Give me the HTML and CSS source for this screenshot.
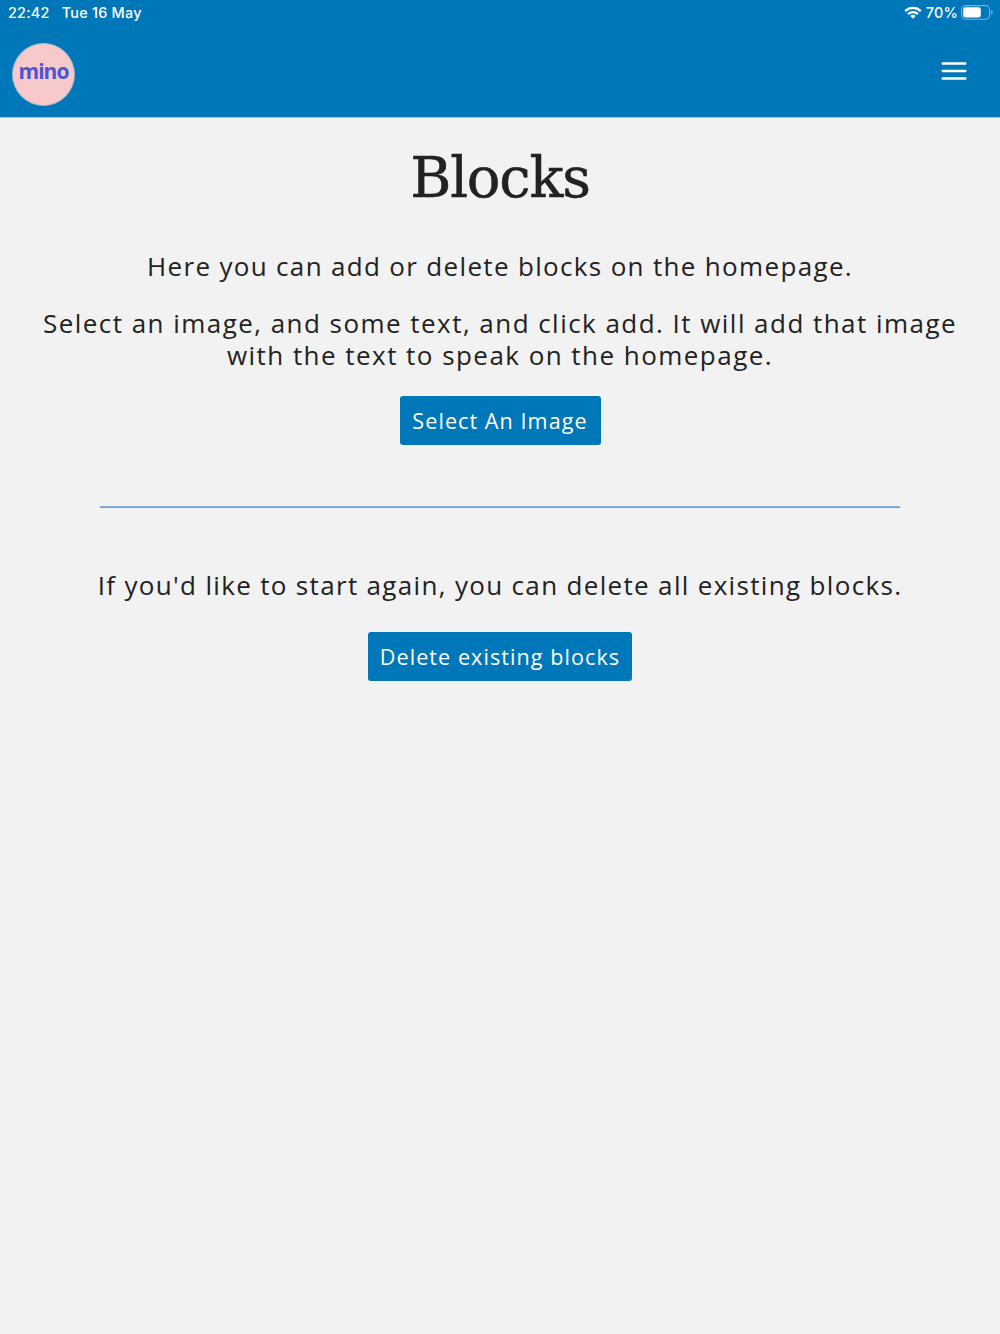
FILE: index.html
```
<!DOCTYPE html>
<html lang="en">
<head>
  <meta charset="UTF-8">
  <meta name="viewport" content="width=device-width, initial-scale=1.0">
  <title>Blocks</title>
  <link rel="stylesheet" href="styles.css">
</head>
<body>
  <!-- Status bar -->
  <div class="status-bar">
    <span class="time">22:42</span>
    <span class="date">Tue 16 May</span>
    <svg class="wifi" width="18" height="13" viewBox="0 0 18 13" fill="none" stroke="#fff" stroke-width="2.3">
      <path d="M1.2 5.1a11.2 11.2 0 0 1 15.6 0"/>
      <path d="M4 8.1a7.1 7.1 0 0 1 10 0"/>
      <path d="M9 12.8L6.3 10.1a3.9 3.9 0 0 1 5.4 0z" fill="#fff" stroke="none"/>
    </svg>
    <span class="percent">70%</span>
    <svg class="battery" width="32" height="15" viewBox="0 0 32 15">
      <rect x="0.6" y="0.6" width="28" height="13.6" rx="4" fill="none" stroke="#fff" stroke-opacity="0.45" stroke-width="1.1"/>
      <rect x="2.2" y="2.2" width="17.6" height="10.4" rx="2.3" fill="#fff"/>
      <path d="M30.3 5v4.8c1.8-.8 1.8-4 0-4.8z" fill="#fff" fill-opacity="0.5"/>
    </svg>
  </div>

  <!-- Header -->
  <header>
    <div class="logo"><span>mino</span></div>
    <button class="menu" aria-label="Menu">
      <svg width="26" height="20" viewBox="0 0 26 20" stroke="#fff" stroke-width="2.4" stroke-linecap="round">
        <path d="M1.7 2.5h22.6M1.7 10h22.6M1.7 17.5h22.6"/>
      </svg>
    </button>
  </header>

  <main>
    <h1>Blocks</h1>
    <p class="intro">Here you can add or delete blocks on the homepage.</p>
    <p class="help">Select an image, and some text, and click add. It will add that image<br>with the text to speak on the homepage.</p>
    <button class="btn select">Select An Image</button>
    <hr>
    <p class="restart">If you'd like to start again, you can delete all existing blocks.</p>
    <button class="btn delete">Delete existing blocks</button>
  </main>
</body>
</html>
```
FILE: styles.css
```
* {
  box-sizing: border-box;
}

body {
  margin: 0;
  min-height: 100vh;
  background: #f2f2f2;
  color: #222;
  font-family: 'Open Sans', sans-serif;
}

.status-bar {
  display: flex;
  align-items: center;
  height: 25px;
  padding: 0 7px 0 8px;
  background: #0077b8;
  color: #fff;
  font: 500 14.4px/25px 'Inter', sans-serif;
  letter-spacing: 0.25px;
}

.date {
  margin-left: 12px;
}

.wifi {
  margin-left: auto;
  margin-right: 4px;
}

.percent {
  margin-right: 3px;
}

header {
  display: flex;
  justify-content: space-between;
  align-items: center;
  height: 93px;
  padding: 6px 33px 0 12px;
  background: #0077b8;
  border-bottom: 1px solid #9cc6de;
}

.logo {
  display: flex;
  justify-content: center;
  width: 63px;
  height: 63px;
  border: 1px solid #a3b5c6;
  border-radius: 50%;
  background: #f8c9ca;
  color: #4956d6;
  font-size: 21px;
  font-weight: 700;
  line-height: 55px;
  letter-spacing: -1px;
}

.menu {
  display: flex;
  margin-top: -6px;
  padding: 0;
  border: none;
  background: none;
}

main {
  display: flex;
  flex-direction: column;
  align-items: center;
  text-align: center;
}

h1 {
  margin: 27px 0 39px;
  font: 400 56px/66px 'DejaVu Serif', serif;
  letter-spacing: -1.2px;
  -webkit-text-stroke: 0.5px #222;
}

p {
  margin: 0 0 25px;
  font-size: 26px;
  line-height: 32px;
  letter-spacing: 1.33px;
  white-space: nowrap;
}

.help {
  letter-spacing: 1.46px;
}

.btn {
  height: 49px;
  padding: 0;
  border: none;
  border-radius: 3px;
  background: #0077b8;
  color: #fff;
  font: 400 21.6px/49px 'Open Sans', sans-serif;
  letter-spacing: 1.05px;
}

.select {
  width: 201px;
}

.delete {
  width: 264px;
}

hr {
  width: 800px;
  height: 2px;
  margin: 61px 0;
  border: none;
  border-top: 1px solid #8ab4e6;
  background: #6f9fd8;
}

.restart {
  margin-bottom: 31px;
}
```
